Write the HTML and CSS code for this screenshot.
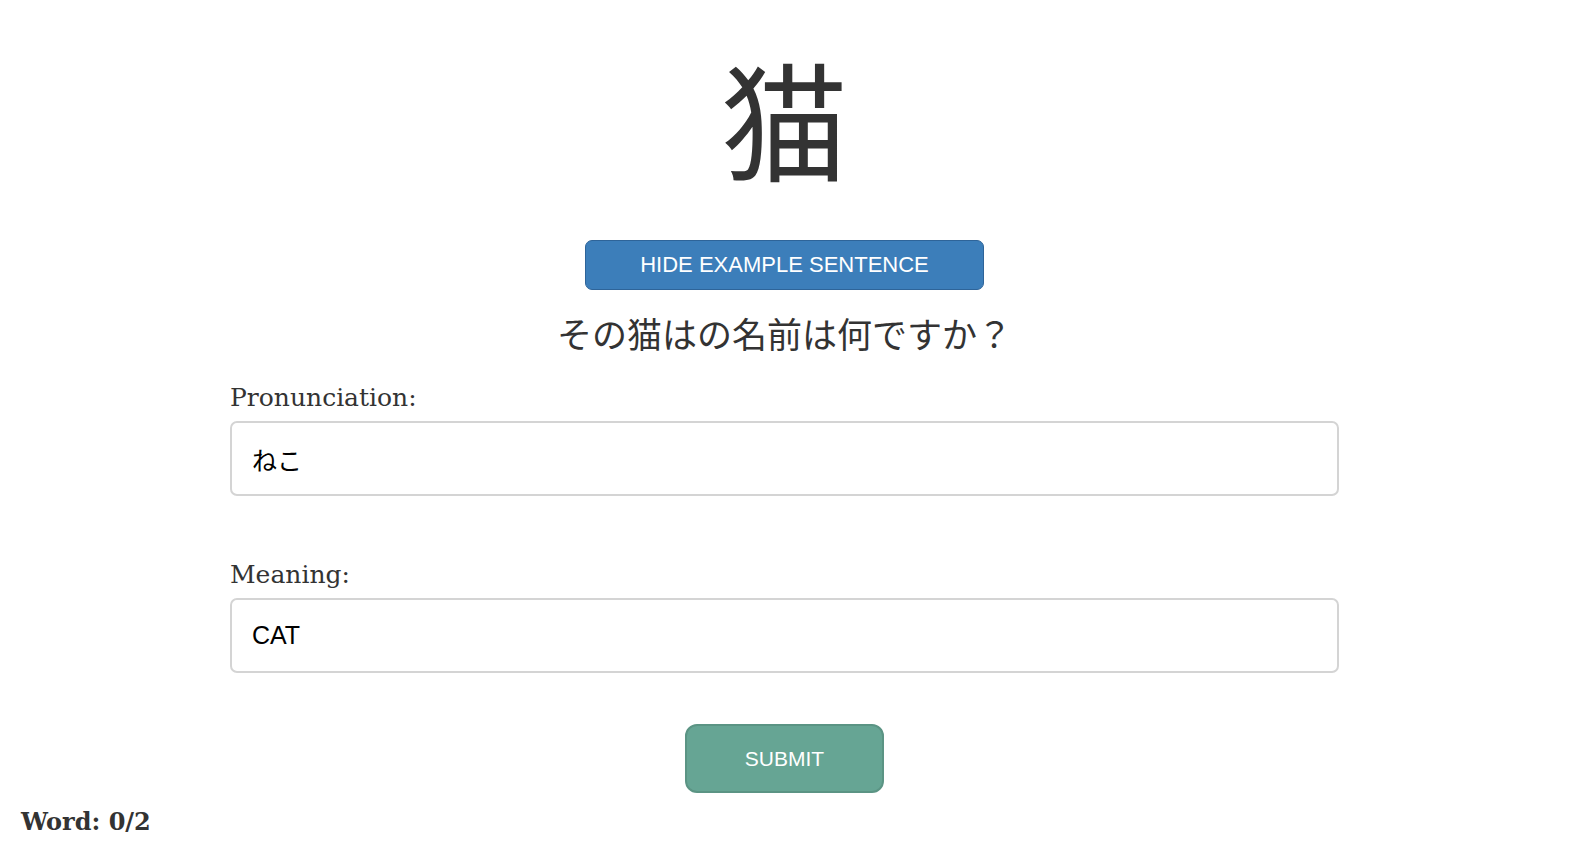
FILE: index.html
```html
<!DOCTYPE html>
<html lang="ja">
<head>
<meta charset="utf-8">
<title>Kanji quiz</title>
<link rel="stylesheet" href="styles.css">
</head>
<body>
<main class="quiz">
  <h1 class="kanji">猫</h1>
  <button class="btn-toggle" type="button">HIDE EXAMPLE SENTENCE</button>
  <p class="sentence">その猫はの名前は何ですか？</p>
  <form class="answer-form">
    <div class="field">
      <label class="field-label" for="pron">Pronunciation:</label>
      <input class="field-input" id="pron" type="text" value="ねこ">
    </div>
    <div class="field">
      <label class="field-label" for="meaning">Meaning:</label>
      <input class="field-input" id="meaning" type="text" value="CAT">
    </div>
    <div class="actions">
      <button class="btn-submit" type="button">SUBMIT</button>
    </div>
  </form>
</main>
<footer class="progress">Word: 0/2</footer>
</body>
</html>
```

FILE: styles.css
```css
html, body {
  margin: 0;
  padding: 0;
  background: #fff;
}

body {
  font-family: "Liberation Sans", "Noto Sans CJK JP", sans-serif;
  color: #333;
}

.quiz {
  width: 1109px;
  margin-left: calc(50% - 556px);
  padding-top: 39px;
  display: flex;
  flex-direction: column;
  align-items: center;
}

.kanji {
  margin: 0;
  font-family: "Noto Sans CJK JP", sans-serif;
  font-weight: 400;
  font-size: 128px;
  line-height: 156px;
  color: #333;
}

.btn-toggle {
  margin-top: 45px;
  width: 399px;
  height: 50px;
  background: #3c7eba;
  border: 1px solid #2e6499;
  border-radius: 7px;
  color: #fff;
  font-family: "Liberation Sans", sans-serif;
  font-size: 22px;
  padding: 0;
  cursor: pointer;
}

.sentence {
  margin: 20px 0 0;
  font-family: "Noto Sans CJK JP", sans-serif;
  font-size: 35px;
  line-height: 46px;
  color: #333;
}

.answer-form {
  align-self: stretch;
  margin-top: 26px;
  display: flex;
  flex-direction: column;
  gap: 63px;
}

.field {
  display: flex;
  flex-direction: column;
  gap: 7px;
}

.field-label {
  font-family: "DejaVu Serif", serif;
  font-size: 25px;
  line-height: 32px;
  color: #333;
}

.field-input {
  box-sizing: border-box;
  width: 100%;
  height: 75px;
  border: 2px solid #d4d4d4;
  border-radius: 7px;
  padding: 0 20px;
  font-family: "Liberation Sans", "Noto Sans CJK JP", sans-serif;
  font-size: 25px;
  color: #000;
  outline: none;
}

.actions {
  display: flex;
  justify-content: center;
  margin-top: -12px;
}

.btn-submit {
  width: 199px;
  height: 69px;
  background: #66a594;
  border: 2px solid #5b9484;
  border-radius: 12px;
  color: #fff;
  font-family: "Liberation Sans", sans-serif;
  font-size: 21px;
  padding: 0;
  cursor: pointer;
}

.progress {
  padding: 12px 0 0 21px;
  font-family: "DejaVu Serif", serif;
  font-weight: 700;
  font-size: 24px;
  line-height: 34px;
  color: #333;
}
```
